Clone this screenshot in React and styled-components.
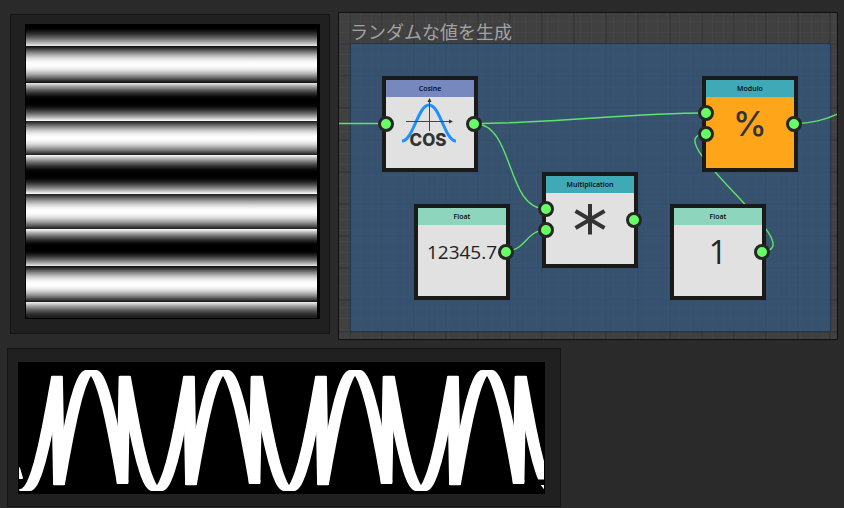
import React from "react";
import styled, { createGlobalStyle } from "styled-components";

const GlobalStyle = createGlobalStyle`
  * { box-sizing: border-box; }
  body {
    margin: 0;
    background: #2a2a2a;
    font-family: "Open Sans", "Noto Sans CJK JP", sans-serif;
  }
`;

const Page = styled.main`
  display: flex;
  flex-direction: column;
  gap: 8px;
  min-height: 100vh;
  padding-top: 12px;
`;

const TopRow = styled.div`
  display: grid;
  grid-template-columns: 320fr 500fr;
  align-items: start;
  gap: 8px;
  padding: 0 6px 0 10px;
`;

const Panel = styled.section`
  background: #202020;
  border: 1px solid #141414;
`;

const TexturePanel = styled(Panel)`
  margin-top: 2px;
  padding: 9px 9px 14px 14px;
`;

const WavePanel = styled(Panel)`
  width: 100%;
  max-width: 554px;
  margin-left: 7px;
  padding: 13px 15px 12px 10px;
`;

const segments = [
  { from: 0, to: 22.5, kind: "rise" },
  { from: 22.5, to: 58.5, kind: "hump" },
  { from: 58.5, to: 96.5, kind: "dip" },
  { from: 96.5, to: 131.5, kind: "hump" },
  { from: 131.5, to: 169.5, kind: "dip" },
  { from: 169.5, to: 205.5, kind: "hump" },
  { from: 205.5, to: 242.5, kind: "dip" },
  { from: 242.5, to: 278, kind: "hump" },
  { from: 278, to: 295, kind: "fall" },
];

const profile = {
  hump: (t) => Math.sin(Math.PI * (0.03 + 0.94 * t)) ** 1.15,
  dip: (t) => 0.96 - Math.sin(Math.PI * t),
  rise: (t) => 0.96 - Math.cos((Math.PI / 2) * t),
  fall: (t) => 0.95 - Math.sin((Math.PI / 2) * t) * 0.85,
};

const stripes = segments
  .flatMap(({ from, to, kind }) =>
    Array.from({ length: 17 }, (_, i) => {
      const t = i / 16;
      const level = Math.round(255 * Math.min(1, Math.max(0, profile[kind](t))));
      const at = (((from + (to - from) * t) / 295) * 100).toFixed(3);
      return `rgb(${level},${level},${level}) ${at}%`;
    })
  )
  .join(",");

const Texture = styled.div`
  aspect-ratio: 1;
  border: 1px solid #000;
  border-right-width: 3px;
  background: linear-gradient(${stripes}) border-box;
`;

const GraphPanel = styled.section`
  overflow: hidden;
  padding: 6px 6px 7px 11px;
  border: 1px solid #111;
  background-color: #404040;
  background-image:
    linear-gradient(rgba(0, 0, 0, 0.1) 2px, transparent 2px),
    linear-gradient(90deg, rgba(0, 0, 0, 0.1) 2px, transparent 2px),
    linear-gradient(rgba(255, 255, 255, 0.02) 1px, transparent 1px),
    linear-gradient(90deg, rgba(255, 255, 255, 0.02) 1px, transparent 1px);
  background-size: 32px 32px, 32px 32px, 32px 11px, 11px 32px;
  background-position: 0 30px, 10px 0, 0 30px, 10px 0;
`;

const Title = styled.h1`
  margin: 0;
  color: #a3a3a3;
  font: 400 18px/24px "Noto Sans CJK JP", sans-serif;
`;

const Canvas = styled.div`
  position: relative;
  height: 289px;
  background-color: rgba(51, 92, 134, 0.68);
  border-radius: 2px;
  box-shadow: inset 0 0 0 1px rgba(20, 40, 60, 0.65);
`;

const Wires = styled.svg`
  position: absolute;
  inset: 0;
  overflow: visible;
  fill: none;
  stroke: #5fe468;
  stroke-width: 1.4;
`;

const NodeBox = styled.article`
  position: absolute;
  left: ${(p) => p.$x}px;
  top: ${(p) => p.$y}px;
  display: flex;
  flex-direction: column;
  width: 96px;
  height: 96px;
  border: 4px solid #1a1a1a;
  background: ${(p) => p.$fill};
`;

const NodeHeader = styled.h2`
  margin: 0;
  height: 17px;
  background: ${(p) => p.$color};
  color: #04070a;
  font: 600 7px/17px "Open Sans", sans-serif;
  text-align: center;
`;

const NodeBody = styled.div`
  display: flex;
  flex: 1;
  justify-content: center;
  color: #2b2b2b;
`;

const FloatValue = styled.span`
  font-size: ${(p) => p.$size}px;
  line-height: 54px;
  color: #222;
`;

const Operator = styled.span`
  font-family: Inter, sans-serif;
  font-size: 34px;
  font-weight: 500;
  line-height: 54px;
  color: #333;
`;

const Port = styled.span`
  position: absolute;
  left: ${(p) => (p.$side === "in" ? -8 : 80)}px;
  top: ${(p) => p.$at - 12}px;
  width: 16px;
  height: 16px;
  border: 3px solid #262626;
  border-radius: 50%;
  background: #66ff66;
`;

const WaveScreen = styled.svg`
  display: block;
  width: 100%;
  background: #000;
`;

function CosineIcon() {
  return (
    <svg width="88" height="71" viewBox="0 0 88 71" aria-hidden="true">
      <path d="M16 44C27 44 32 8 43 8S59 44 70 44" fill="none" stroke="#1e90ff" strokeWidth="3" />
      <path d="M20 24.500H64M43.500 34V4" fill="none" stroke="#444" strokeWidth="1" />
      <path d="M63 22.500L67 24.500L63 26.500ZM41.500 5L43.500 1L45.500 5Z" fill="#333" />
      <text x="42" y="49" textAnchor="middle" fontFamily="Inter, sans-serif" fontWeight="800" fontSize="17" fill="#333">COS</text>
    </svg>
  );
}

function MultiplyIcon() {
  return (
    <svg width="88" height="71" viewBox="0 0 88 71" role="img" aria-label="*">
      <path d="M44 11V41.500M29.500 18L58.500 35M58.500 18L29.500 35" fill="none" stroke="#333" strokeWidth="4" />
    </svg>
  );
}

const nodes = [
  { id: "cosine", title: "Cosine", x: 32, y: 33, header: "#7688bd", inputs: [48], body: <CosineIcon /> },
  {
    id: "float-a", title: "Float", x: 64, y: 161, header: "#8ed5bd", inputs: [],
    body: <FloatValue $size={19}>12345.7</FloatValue>,
  },
  {
    id: "multiply", title: "Multiplication", x: 192, y: 129, header: "#40a9b8", inputs: [37, 58],
    body: <MultiplyIcon />,
  },
  {
    id: "modulo", title: "Modulo", x: 352, y: 33, header: "#40a9b8", fill: "#ffa51a", inputs: [37, 58],
    body: <Operator>%</Operator>,
  },
  {
    id: "float-b", title: "Float", x: 320, y: 161, header: "#8ed5bd", inputs: [],
    body: <FloatValue $size={32}>1</FloatValue>,
  },
];

function GraphNode({ node }) {
  return (
    <NodeBox $x={node.x} $y={node.y} $fill={node.fill || "#e1e1e1"}>
      <NodeHeader $color={node.header}>{node.title}</NodeHeader>
      <NodeBody>{node.body}</NodeBody>
      {node.inputs.map((at) => (
        <Port key={at} $side="in" $at={at} />
      ))}
      <Port $side="out" $at={48} />
    </NodeBox>
  );
}

function Graph() {
  return (
    <GraphPanel>
      <Title>ランダムな値を生成</Title>
      <Canvas>
        <Wires width="481" height="289" aria-hidden="true">
          <path d="M-12 80.500H36" />
          <path d="M124 80.500C200 80.500 280 70 356 70" />
          <path d="M124 80.500C165 80.500 155 166 196 166" />
          <path d="M156 208C176 208 176 187 196 187" />
          <path d="M412 208C466 208 302 91 356 91" />
          <path d="M444 80.500C462 80.500 474 77 490 70" />
        </Wires>
        {nodes.map((node) => (
          <GraphNode key={node.id} node={node} />
        ))}
      </Canvas>
    </GraphPanel>
  );
}

const PERIOD = 132;
const swing = (dx) => 119 * (1 - Math.cos((2 * Math.PI * dx) / PERIOD));
const arc = (center, from, to, y) =>
  Array.from({ length: 25 }, (_, i) => {
    const dx = from + ((to - from) * i) / 24;
    return [center + dx, y(dx)];
  });
const crest = (dx) => 9 + swing(dx);
const trough = (dx) => 128 - swing(dx);

const sweep = (points) => {
  const left = points.map(([x, y]) => `${(x - 4.9).toFixed(1)} ${y.toFixed(1)}`);
  const right = points.map(([x, y]) => `${(x + 4.9).toFixed(1)} ${y.toFixed(1)}`).reverse();
  return `M${left.concat(right).join("L")}Z`;
};

const waveRuns = [0, 1, 2, 3].flatMap((n) => {
  const peak = 73 + n * PERIOD;
  return [
    arc(peak - 66, 0, 32, trough),
    [[peak - 34, 16], [peak - 32, 122]],
    arc(peak, -32, 0, crest),
    arc(peak, 0, 31.5, crest),
    [[peak + 31.5, 121], [peak + 33.5, 15]],
    arc(peak + 66, -32, 0, trough),
  ].map(sweep);
});

function Wave() {
  return (
    <WaveScreen viewBox="0 0 527 132" role="img" aria-label="Waveform">
      <g fill="#fff" stroke="#fff" strokeWidth="2" strokeLinejoin="round">
        {waveRuns.map((d, i) => (
          <path key={i} d={d} />
        ))}
        <path d="M1 106L4 116H1Z" />
      </g>
      <path d="M0 117.500H5V123H0ZM519 117.500H527V123H519ZM0 0H1V132H0ZM526 0H527V132H526Z" fill="#000" />
    </WaveScreen>
  );
}

export default function App() {
  return (
    <>
      <GlobalStyle />
      <Page>
        <TopRow>
          <TexturePanel>
            <Texture role="img" aria-label="Stripe texture" />
          </TexturePanel>
          <Graph />
        </TopRow>
        <WavePanel>
          <Wave />
        </WavePanel>
      </Page>
    </>
  );
}
